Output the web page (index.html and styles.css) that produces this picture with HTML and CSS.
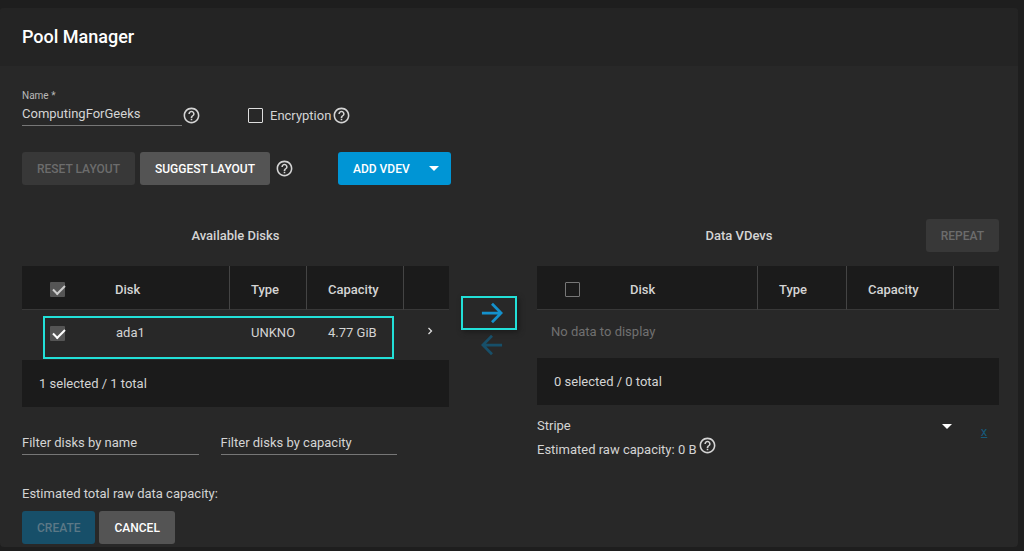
FILE: index.html
```html
<!DOCTYPE html>
<html lang="en">
<head>
    <meta charset="utf-8">
    <title>Pool Manager</title>
    <link rel="stylesheet" href="styles.css">
</head>
<body>
    <svg class="sprite" aria-hidden="true">
        <symbol id="help" viewBox="0 0 24 24">
            <path d="M11 18h2v-2h-2v2zm1-16C6.48 2 2 6.48 2 12s4.48 10 10 10 10-4.48 10-10S17.52 2 12 2zm0 18c-4.41 0-8-3.59-8-8s3.59-8 8-8 8 3.59 8 8-3.59 8-8 8zm0-14c-2.21 0-4 1.79-4 4h2c0-1.1.9-2 2-2s2 .9 2 2c0 2-3 1.75-3 5h2c0-2.25 3-2.5 3-5 0-2.21-1.79-4-4-4z"/>
        </symbol>
    </svg>

    <main class="card">
        <header class="card-header">
            <h1>Pool Manager</h1>
        </header>

        <form class="card-body">
            <div class="row name-row">
                <div class="field name-field">
                    <label for="name">Name *</label>
                    <input type="text" id="name" value="ComputingForGeeks">
                </div>
                <svg class="help"><use href="#help"/></svg>
                <div class="encryption">
                    <input type="checkbox" class="check check-light" id="encryption">
                    <label for="encryption">Encryption</label>
                    <svg class="help"><use href="#help"/></svg>
                </div>
            </div>

            <div class="row layout-row">
                <button type="button" class="btn" disabled>Reset Layout</button>
                <button type="button" class="btn">Suggest Layout</button>
                <svg class="help"><use href="#help"/></svg>
                <button type="button" class="btn btn-primary add-vdev">Add Vdev <span class="caret"></span></button>
            </div>

            <div class="disks">
                <section>
                    <div class="title-bar">
                        <h2>Available Disks</h2>
                    </div>
                    <div class="table-wrap">
                        <table>
                            <colgroup>
                                <col class="col-check"><col><col class="col-type"><col class="col-capacity"><col class="col-more">
                            </colgroup>
                            <thead>
                                <tr>
                                    <th><input type="checkbox" class="check" aria-label="Select all available disks" checked></th>
                                    <th>Disk</th>
                                    <th class="line">Type</th>
                                    <th class="line">Capacity</th>
                                    <th class="line"></th>
                                </tr>
                            </thead>
                            <tbody>
                                <tr>
                                    <td><input type="checkbox" class="check check-bright" aria-label="Select ada1" checked></td>
                                    <td>ada1</td>
                                    <td>UNKNO</td>
                                    <td>4.77 GiB</td>
                                    <td class="more">
                                        <button type="button" class="icon-btn" aria-label="Show details">
                                            <svg class="chevron" viewBox="0 0 6 8"><path d="M1.5 1l3 3-3 3"/></svg>
                                        </button>
                                    </td>
                                </tr>
                            </tbody>
                            <tfoot>
                                <tr><td colspan="5">1 selected / 1 total</td></tr>
                            </tfoot>
                        </table>
                        <div class="highlight"></div>
                    </div>
                    <div class="filters">
                        <input type="text" placeholder="Filter disks by name" aria-label="Filter disks by name">
                        <input type="text" placeholder="Filter disks by capacity" aria-label="Filter disks by capacity">
                    </div>
                </section>

                <div class="arrows">
                    <button type="button" class="arrow arrow-marked" aria-label="Add to vdev">
                        <svg viewBox="0 0 24 24"><path d="M1 12h21M12 2l10 10-10 10"/></svg>
                    </button>
                    <button type="button" class="arrow" aria-label="Remove from vdev" disabled>
                        <svg viewBox="0 0 24 24"><path d="M23 12H2M12 2L2 12l10 10"/></svg>
                    </button>
                </div>

                <section class="vdev">
                    <div class="title-bar">
                        <h2>Data VDevs</h2>
                        <button type="button" class="btn repeat" disabled>Repeat</button>
                    </div>
                    <table>
                        <colgroup>
                            <col class="col-check"><col><col class="col-type"><col class="col-capacity"><col class="col-more">
                        </colgroup>
                        <thead>
                            <tr>
                                <th><input type="checkbox" class="check" aria-label="Select all vdev disks"></th>
                                <th>Disk</th>
                                <th class="line">Type</th>
                                <th class="line">Capacity</th>
                                <th class="line"></th>
                            </tr>
                        </thead>
                        <tbody>
                            <tr><td colspan="5" class="empty">No data to display</td></tr>
                        </tbody>
                        <tfoot>
                            <tr><td colspan="5">0 selected / 0 total</td></tr>
                        </tfoot>
                    </table>
                    <div class="vdev-type">
                        <div class="select">
                            <select aria-label="Vdev type">
                                <option>Stripe</option>
                                <option>Mirror</option>
                            </select>
                            <span class="caret"></span>
                        </div>
                        <button type="button" class="remove" disabled>x</button>
                    </div>
                    <div class="estimate">
                        <span>Estimated raw capacity: 0 B</span>
                        <svg class="help"><use href="#help"/></svg>
                    </div>
                </section>
            </div>

            <p class="total">Estimated total raw data capacity:</p>
            <div class="actions">
                <button type="submit" class="btn btn-primary" disabled>Create</button>
                <button type="button" class="btn">Cancel</button>
            </div>
        </form>
    </main>
</body>
</html>
```
FILE: styles.css
```css
* {
    box-sizing: border-box;
}

body {
    margin: 0;
    padding: 8px 6px 5px 0;
    background-color: #1e1e1e;
    color: #d4d4d4;
    font-family: Roboto, sans-serif;
    font-size: 13px;
    line-height: 16px;
}

input, button, select {
    font: inherit;
    color: inherit;
    margin: 0;
}

h1, h2, p {
    margin: 0;
}

.sprite {
    position: absolute;
    width: 0;
    height: 0;
}

.card {
    background-color: #282828;
    border-radius: 4px;
}

.card-header {
    padding: 17px 22px;
    background-color: #242424;
    border-radius: 4px 4px 0 0;
}

h1 {
    font-size: 18px;
    line-height: 24px;
    font-weight: 500;
    color: #fff;
}

.card-body {
    padding: 24px 19px 3px 22px;
}

.row {
    display: flex;
    align-items: center;
}

.help {
    flex: none;
    width: 19px;
    height: 19px;
    fill: #d4d4d4;
}

/* name and encryption */
.name-row {
    align-items: flex-end;
}

.name-row > .help, .encryption {
    margin-bottom: 1px;
}

.field {
    display: flex;
    flex-direction: column;
}

.name-field {
    width: 160px;
}

.name-field label {
    font-size: 10px;
    line-height: 12px;
    color: #b8b8b8;
}

input[type="text"] {
    width: 100%;
    height: 24px;
    padding: 0;
    border: none;
    border-bottom: 1px solid #777;
    border-radius: 0;
    background: none;
    outline: none;
}

input[type="text"]::placeholder {
    color: #d4d4d4;
    opacity: 1;
}

.encryption {
    display: flex;
    align-items: center;
    margin-left: 47px;
}

.encryption label {
    margin: 0 1px 0 7px;
}

.check {
    appearance: none;
    display: block;
    position: relative;
    width: 15px;
    height: 15px;
    border: 1px solid #777;
    border-radius: 1px;
}

.check-light {
    border-color: #ddd;
}

.check:checked {
    border: none;
    background-color: #555;
    color: #ccc;
}

.check-bright:checked {
    color: #fff;
}

.check:checked::after {
    content: "";
    position: absolute;
    left: 3px;
    top: 3px;
    width: 10px;
    height: 5px;
    border: solid currentColor;
    border-width: 0 0 2px 2px;
    transform: rotate(-45deg);
}

/* buttons */
.btn {
    height: 33px;
    padding: 0 15px;
    border: none;
    border-radius: 3px;
    background-color: #545454;
    color: #fff;
    font-size: 12px;
    font-weight: 500;
    text-transform: uppercase;
}

.btn:disabled {
    background-color: #383838;
    color: #6c6c6c;
}

.btn-primary {
    background-color: #0095d5;
}

.btn-primary:disabled {
    background-color: #174f69;
    color: #5c7886;
}

.layout-row {
    margin-top: 26px;
    gap: 5px;
}

.add-vdev {
    display: flex;
    align-items: center;
    gap: 19px;
    margin-left: 39px;
    padding-right: 12px;
}

.caret {
    border: 5px solid transparent;
    border-top-color: #fff;
    border-bottom: none;
}

/* disk tables */
.disks {
    display: grid;
    grid-template-columns: 427fr 88fr 462fr;
    margin-top: 34px;
}

.title-bar {
    position: relative;
    display: flex;
    justify-content: center;
    align-items: center;
    height: 33px;
    margin-bottom: 14px;
}

.vdev .title-bar {
    padding-right: 58px;
}

h2 {
    font-size: 13px;
    font-weight: 500;
}

.repeat {
    position: absolute;
    right: 0;
}

.table-wrap {
    position: relative;
}

table {
    width: 100%;
    border-collapse: separate;
    border-spacing: 0;
    table-layout: fixed;
}

.col-check { width: 72px; }
.col-type { width: 77px; }
.col-capacity { width: 97px; }
.col-more { width: 46px; }

.vdev .col-type { width: 89px; }
.vdev .col-capacity { width: 107px; }

th, td {
    padding: 0 0 0 21px;
    text-align: left;
}

th {
    height: 44px;
    padding-top: 4px;
    border-bottom: 1px solid #383838;
    background-color: #1b1b1b;
    font-weight: 500;
}

th:first-child, td:first-child {
    padding-left: 28px;
}

.line {
    border-left: 1px solid #444;
}

td {
    height: 50px;
    padding-left: 22px;
    padding-bottom: 4px;
}

.more {
    text-align: center;
    padding-left: 8px;
    padding-bottom: 8px;
}

.icon-btn {
    padding: 0;
    border: none;
    background: none;
}

.chevron {
    width: 6px;
    height: 8px;
    fill: none;
    stroke: #ddd;
    stroke-width: 1.3;
}

.vdev tbody td {
    height: 48px;
}

td.empty:first-child {
    padding-left: 14px;
    color: #707070;
}

tfoot td {
    height: 47px;
    padding-bottom: 0;
    background-color: #1b1b1b;
}

tfoot td:first-child {
    padding-left: 17px;
}

.highlight {
    position: absolute;
    top: 50px;
    left: 5%;
    right: 13%;
    height: 43px;
    border: 2px solid #22e0d8;
    pointer-events: none;
}

.filters {
    display: grid;
    grid-template-columns: 1fr 1fr;
    gap: 22px;
    margin-top: 24px;
    padding-right: 52px;
}

/* arrows between the tables */
.arrows {
    display: flex;
    flex-direction: column;
    align-items: center;
    padding: 77px 8px 0 0;
}

.arrow {
    display: flex;
    align-items: center;
    justify-content: center;
    width: 56px;
    height: 30px;
    padding: 0 0 0 6px;
    border: 2px solid transparent;
    background: none;
}

.arrow svg {
    width: 22px;
    height: 22px;
    fill: none;
    stroke: #1491cc;
    stroke-width: 3;
}

.arrow-marked {
    height: 34px;
    border-color: #22e0d8;
    box-shadow: 2px 2px 5px #1b1b1b;
}

.arrow:disabled svg {
    stroke: #174f69;
}

/* vdev layout */
.vdev-type {
    display: flex;
    align-items: flex-start;
    margin-top: 13px;
}

.select {
    position: relative;
    flex: 1;
}

select {
    appearance: none;
    display: block;
    width: 100%;
    padding: 0;
    border: none;
    background: none;
    outline: none;
}

.select .caret {
    position: absolute;
    top: 6px;
    right: 5px;
    pointer-events: none;
}

.remove {
    width: 42px;
    height: 22px;
    padding: 6px 0 0 12px;
    border: none;
    background: none;
    color: #17597a;
    text-decoration: underline;
}

.estimate {
    display: flex;
    align-items: flex-end;
    gap: 1px;
    margin-top: -4px;
}

.estimate .help {
    margin-bottom: 3px;
}

.total {
    margin-top: 28px;
}

.actions {
    display: flex;
    gap: 4px;
    margin-top: 9px;
}
```
